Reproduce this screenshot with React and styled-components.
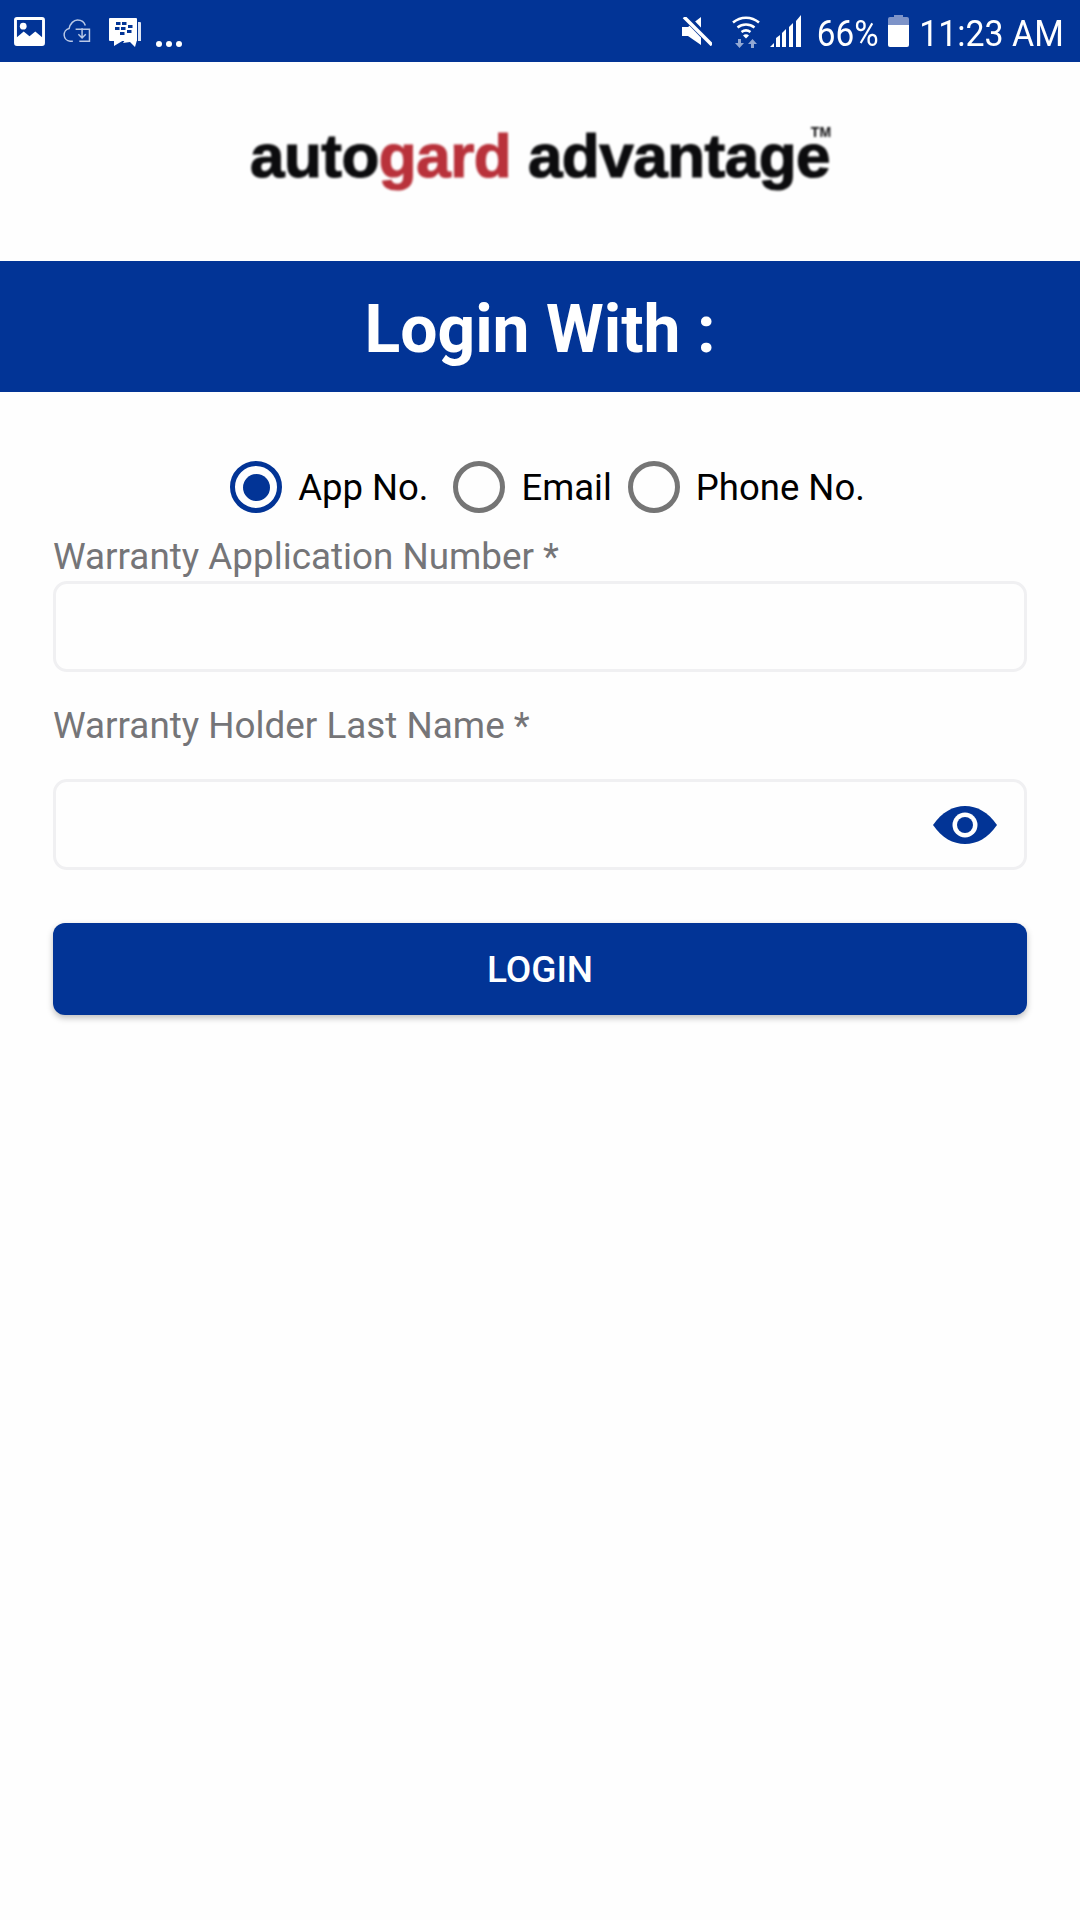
import React from "react";
import styled, { createGlobalStyle } from "styled-components";

const BLUE = "#023496";

const GlobalStyle = createGlobalStyle`
  html, body {
    margin: 0;
    padding: 0;
    background: #fefefe;
  }
  body {
    font-family: Roboto, "Liberation Sans", sans-serif;
  }
`;

const Page = styled.div`
  width: 1080px;
  height: 1920px;
  display: flex;
  flex-direction: column;
  background: #fefefe;
  overflow: hidden;
`;

const StatusBar = styled.div`
  height: 62px;
  background: ${BLUE};
  display: flex;
  align-items: center;
  justify-content: space-between;
  padding: 0 16px 0 14px;
  color: #fff;
  box-sizing: border-box;
`;

const StatusGroup = styled.div`
  display: flex;
  align-items: center;
`;

const IconSlot = styled.span`
  display: flex;
  margin-left: ${(p) => p.$left || 0}px;
  margin-top: ${(p) => p.$top || 0}px;
`;

const StatusText = styled.span`
  font-size: 37px;
  line-height: 36px;
  margin-top: 5px;
  white-space: nowrap;
  transform: scaleX(${(p) => p.$scale});
  transform-origin: right center;
  margin-left: ${(p) => p.$left}px;
`;

const Dots = styled.span`
  display: flex;
  gap: 4px;
  margin-left: 15px;
  margin-top: 25px;
`;

const Dot = styled.i`
  width: 6px;
  height: 6px;
  border-radius: 50%;
  background: #fff;
`;

const LogoArea = styled.div`
  height: 199px;
  display: flex;
  align-items: center;
  justify-content: center;
`;

const Logo = styled.div`
  position: relative;
  font-family: "Liberation Sans", Arial, sans-serif;
  font-weight: 700;
  font-size: 62px;
  line-height: 60px;
  letter-spacing: -0.5px;
  color: #0c0c0e;
  -webkit-text-stroke: 1.2px currentColor;
  white-space: nowrap;
  filter: blur(0.8px);
  margin-top: -11px;
`;

const LogoRed = styled.span`
  color: #b9323b;
`;

const Trademark = styled.span`
  position: absolute;
  right: -1px;
  top: -1px;
  font-size: 14px;
  line-height: 14px;
  letter-spacing: 0;
  -webkit-text-stroke: 0;
`;

const Banner = styled.div`
  height: 131px;
  box-sizing: border-box;
  padding-top: 5px;
  background: ${BLUE};
  color: #fff;
  font-size: 66px;
  font-weight: 700;
  display: flex;
  align-items: center;
  justify-content: center;
  white-space: nowrap;
`;

const Form = styled.div`
  padding: 0 53px;
  display: flex;
  flex-direction: column;
`;

const RadioRow = styled.div`
  display: flex;
  justify-content: center;
  align-items: center;
  margin-top: 69px;
  padding-left: 15px;
  height: 52px;
`;

const RadioOption = styled.label`
  display: flex;
  align-items: center;
  gap: 16px;
  margin-right: ${(p) => p.$after || 0}px;
  font-size: 36.5px;
  color: #000;
  white-space: nowrap;
`;

const RadioCircle = styled.span`
  width: 52px;
  height: 52px;
  box-sizing: border-box;
  border-radius: 50%;
  border: 5px solid ${(p) => (p.$checked ? BLUE : "#757575")};
  display: flex;
  align-items: center;
  justify-content: center;
`;

const RadioDot = styled.span`
  width: 27px;
  height: 27px;
  border-radius: 50%;
  background: ${BLUE};
`;

const FieldLabel = styled.div`
  font-size: 36.85px;
  line-height: 44px;
  color: #757578;
  white-space: nowrap;
  margin-top: ${(p) => p.$top}px;
`;

const InputBox = styled.div`
  height: 91px;
  box-sizing: border-box;
  border: 3px solid #f0f0f2;
  border-radius: 14px;
  background: #fefefe;
  margin-top: ${(p) => p.$top}px;
  display: flex;
  align-items: center;
  justify-content: flex-end;
  padding-right: 27px;
`;

const LoginButton = styled.button`
  height: 92px;
  margin-top: 53px;
  border: 0;
  border-radius: 12px;
  background: ${BLUE};
  color: #fff;
  font-family: Roboto, sans-serif;
  font-size: 37px;
  font-weight: 500;
  box-shadow: 0 3px 6px rgba(0, 0, 0, 0.25);
`;

const PictureIcon = () => (
  <svg width="31" height="29" viewBox="0 0 32 30">
    <path fill="#fff" d="M3 0h26a3 3 0 0 1 3 3v24a3 3 0 0 1-3 3H3a3 3 0 0 1-3-3V3a3 3 0 0 1 3-3z" />
    <path fill={BLUE} d="M3 3h26v18l-7-6-6 5-6-5-7 6z" />
    <circle cx="9.5" cy="9.5" r="3.5" fill="#fff" />
  </svg>
);

const CloudIcon = () => (
  <svg width="30" height="24" viewBox="0 0 31 26" fill="none" stroke="#b9c8e6" strokeWidth="1.6">
    <path d="M11 24H8a7 7 0 0 1-1-13.800C8 5 12 1 16 1c4 0 7.500 2.500 8.500 6" />
    <path d="M14 11h15v13H18" />
    <path d="M21 10v10M17 16.500l4 4 4-4" />
  </svg>
);

const MessengerIcon = () => (
  <svg width="32" height="29" viewBox="0 0 32 29">
    <path fill="#dfe6f4" d="M29 4h2a1 1 0 0 1 1 1v18h-3z" />
    <path fill="#fff" d="M1 0h26a1 1 0 0 1 1 1v21a1 1 0 0 1-1 1H1a1 1 0 0 1-1-1V1a1 1 0 0 1 1-1z" />
    <path fill="#fff" d="M5 22h10l-10 6zM16 22h12l-2 7-5-5-7 1z" />
    <g fill={BLUE}>
      <rect x="7" y="4" width="4.500" height="3" />
      <rect x="13" y="4" width="4.500" height="3" />
      <rect x="6" y="9" width="4.500" height="3" />
      <rect x="12" y="9" width="4.500" height="3" />
      <rect x="19" y="7" width="4.500" height="3" />
      <rect x="18" y="12" width="4.500" height="3" />
      <rect x="11" y="14" width="4.500" height="3" />
    </g>
  </svg>
);

const MuteIcon = () => (
  <svg width="30" height="29" viewBox="0 0 30 29">
    <path fill="#fff" d="M0 10h6L19 0v28L6 19H0z" />
    <path stroke={BLUE} strokeWidth="7" d="M4 0l26 27" />
    <path stroke="#fff" strokeWidth="3.500" d="M2 0l28 28" />
  </svg>
);

const WifiIcon = () => (
  <svg width="28" height="33" viewBox="0 0 28 33" fill="none">
    <path stroke="#fff" strokeWidth="2.500" d="M1 7.500C8.500 1 19.500 1 27 7.500" />
    <path stroke="#fff" strokeWidth="2.500" d="M5.500 12.500c5-4 12-4 17 0" />
    <path stroke="#fff" strokeWidth="2.500" d="M9.500 17c2.800-2 6.200-2 9 0" />
    <path fill="#fff" d="M11 20.500a4 4 0 0 1 6 0l-3 3z" />
    <path fill="#93a8d3" d="M6 24h3v4h3l-4.500 5L3 28h3zM19 33h3v-4h3l-4.500-5-4.500 5h3z" />
  </svg>
);

const SignalIcon = () => (
  <svg width="32" height="32" viewBox="0 0 32 32">
    <path fill="#fff" d="M0 32l4-4v4zM6 32v-9l4-3v12zM12 32V18l4-4v18zM19 32V12l4-4v24zM26 32V6l5-6v32z" />
  </svg>
);

const BatteryIcon = () => (
  <svg width="21" height="32" viewBox="0 0 21 32">
    <path fill="#7d93c8" d="M6 0h9v2h4a2 2 0 0 1 2 2v6H0V4a2 2 0 0 1 2-2h4z" />
    <path fill="#fff" d="M0 10h21v20a2 2 0 0 1-2 2H2a2 2 0 0 1-2-2z" />
  </svg>
);

const EyeIcon = () => (
  <svg width="64" height="38" viewBox="0 0 64 38">
    <path fill={BLUE} d="M0 19C9 6 20 0 32 0s23 6 32 19c-9 13-20 19-32 19S9 32 0 19z" />
    <circle cx="32" cy="19" r="12.5" fill="#fefefe" />
    <circle cx="32" cy="19" r="8" fill={BLUE} />
  </svg>
);

const OPTIONS = [
  { label: "App No.", checked: true, after: 25 },
  { label: "Email", after: 16 },
  { label: "Phone No." },
];

export default function App() {
  return (
    <Page>
      <GlobalStyle />
      <StatusBar>
        <StatusGroup>
          <PictureIcon />
          <IconSlot $left={17} $top={-1}><CloudIcon /></IconSlot>
          <IconSlot $left={17} $top={3}><MessengerIcon /></IconSlot>
          <Dots>
            <Dot />
            <Dot />
            <Dot />
          </Dots>
        </StatusGroup>
        <StatusGroup>
          <IconSlot><MuteIcon /></IconSlot>
          <IconSlot $left={20}><WifiIcon /></IconSlot>
          <IconSlot $left={10}><SignalIcon /></IconSlot>
          <StatusText $scale={0.9} $left={8}>66%</StatusText>
          <IconSlot $left={10}><BatteryIcon /></IconSlot>
          <StatusText $scale={0.916} $left={-3}>11:23 AM</StatusText>
        </StatusGroup>
      </StatusBar>

      <LogoArea>
        <Logo>
          auto<LogoRed>gard</LogoRed> advantage
          <Trademark>TM</Trademark>
        </Logo>
      </LogoArea>

      <Banner>Login With :</Banner>

      <Form>
        <RadioRow>
          {OPTIONS.map((o) => (
            <RadioOption key={o.label} $after={o.after}>
              <RadioCircle $checked={o.checked}>{o.checked && <RadioDot />}</RadioCircle>
              {o.label}
            </RadioOption>
          ))}
        </RadioRow>

        <FieldLabel $top={22}>Warranty Application Number *</FieldLabel>
        <InputBox $top={2} />

        <FieldLabel $top={32}>Warranty Holder Last Name *</FieldLabel>
        <InputBox $top={31}>
          <EyeIcon />
        </InputBox>

        <LoginButton>LOGIN</LoginButton>
      </Form>
    </Page>
  );
}
